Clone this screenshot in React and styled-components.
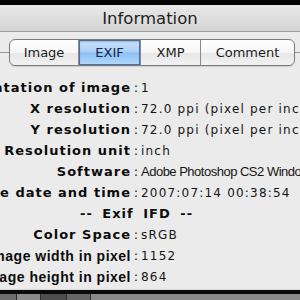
import React from 'react';
import styled, { createGlobalStyle } from 'styled-components';

const GlobalStyle = createGlobalStyle`
  html, body {
    margin: 0;
    padding: 0;
    width: 300px;
    height: 300px;
    overflow: hidden;
    background: #ebebeb;
  }
`;

const Window = styled.div`
  width: 300px;
  height: 300px;
  display: flex;
  flex-direction: column;
  overflow: hidden;
  background: #ebebeb;
`;

const TopEdge = styled.div`
  height: 5px;
  flex-shrink: 0;
  background: #050505;
`;

const TitleBar = styled.div`
  height: 26px;
  flex-shrink: 0;
  display: flex;
  align-items: center;
  justify-content: center;
  font-family: 'DejaVu Sans', sans-serif;
  font-size: 16.5px;
  color: #1e1e1e;
  background: linear-gradient(#e8e8e8, #d4d4d4);
  border-bottom: 1px solid #9c9c9c;
`;

const Body = styled.div`
  flex: 1;
  display: flex;
  flex-direction: column;
  background: #ebebeb;
  border-bottom: 1px solid #d9d9d9;
`;

const TabRow = styled.div`
  position: relative;
  margin-top: 7px;
  height: 27px;
  padding-left: 9px;

  &::before {
    content: '';
    position: absolute;
    left: 0;
    right: 0;
    top: 13px;
    border-top: 1px solid #9a9a9a;
  }
`;

const Segmented = styled.div`
  position: relative;
  z-index: 1;
  display: flex;
  width: 286px;
  height: 27px;
  box-sizing: border-box;
  border: 1px solid #7c7c7c;
  border-radius: 6px;
  overflow: hidden;
  background: linear-gradient(#ffffff 0%, #f6f6f6 50%, #e6e6e6 51%, #f2f2f2 100%);
  box-shadow: 0 1px 1px rgba(0, 0, 0, 0.12);
`;

const Segment = styled.div`
  width: ${(props) => props.w}px;
  box-sizing: border-box;
  display: flex;
  align-items: center;
  justify-content: center;
  font-family: 'DejaVu Sans', sans-serif;
  font-size: 13px;
  color: ${(props) => (props.active ? '#14264a' : '#1c1c1c')};
  border-left: ${(props) => (props.first ? 'none' : '1px solid #8a8a8a')};
  background: ${(props) =>
    props.active
      ? 'linear-gradient(#cfe5fc 0%, #a9d0f7 48%, #8cbff2 52%, #b2dafc 100%)'
      : 'transparent'};
  box-shadow: ${(props) =>
    props.active ? 'inset 0 0 0 1px #4f6f9c, inset 0 2px 2px rgba(30, 60, 110, 0.3)' : 'none'};
`;

const Rows = styled.div`
  margin-top: 11px;
  display: grid;
  grid-template-columns: 131px 10px 1fr;
  grid-auto-rows: 21px;
  align-items: center;
`;

const Label = styled.div`
  display: flex;
  justify-content: flex-end;
  white-space: nowrap;
  font-family: ${(props) => (props.narrow ? "'Liberation Sans', Arial" : "'DejaVu Sans'")}, sans-serif;
  font-weight: bold;
  font-size: ${(props) => (props.narrow ? 14 : 13)}px;
  letter-spacing: ${(props) => (props.narrow ? 0.5 : 1)}px;
  color: #0c0c0c;

  span {
    flex-shrink: 0;
  }
`;

const Colon = styled.div`
  text-align: center;
  font-family: 'DejaVu Sans', sans-serif;
  font-size: 13px;
  color: #111;
`;

const Value = styled.div`
  white-space: nowrap;
  font-family: ${(props) => (props.narrow ? "'Liberation Sans', Arial" : "'DejaVu Sans'")}, sans-serif;
  font-size: ${(props) => (props.narrow ? 13 : 12)}px;
  letter-spacing: ${(props) => (props.narrow ? -0.5 : 1.2)}px;
  color: #151515;
`;

const Section = styled.div`
  grid-column: 1 / -1;
  padding-left: 80px;
  white-space: nowrap;
  font-family: 'DejaVu Sans', sans-serif;
  font-weight: bold;
  font-size: 13px;
  letter-spacing: 1px;
  word-spacing: 4px;
  color: #0c0c0c;
`;

const Footer = styled.div`
  height: 6px;
  flex-shrink: 0;
  display: flex;
  border-top: 4px solid #0a0a0a;
  background: #8a8a8a;
`;

const FooterCell = styled.div`
  width: ${(props) => props.w}px;
  background: ${(props) => props.bg};
  border-right: 1px solid #2e2e2e;
`;

const tabs = [
  { name: 'Image', w: 68 },
  { name: 'EXIF', w: 62, active: true },
  { name: 'XMP', w: 60 },
  { name: 'Comment', w: 94 },
];

const rows = [
  { label: 'Orientation of image', value: '1' },
  { label: 'X resolution', value: '72.0 ppi (pixel per inch)' },
  { label: 'Y resolution', value: '72.0 ppi (pixel per inch)' },
  { label: 'Resolution unit', value: 'inch' },
  { label: 'Software', value: 'Adobe Photoshop CS2 Windows', narrowValue: true },
  { label: 'File change date and time', value: '2007:07:14 00:38:54' },
  { section: '-- Exif IFD --' },
  { label: 'Color Space', value: 'sRGB' },
  { label: 'Image width in pixel', value: '1152', narrow: true },
  { label: 'Image height in pixel', value: '864', narrow: true },
];

const footerCells = [
  { w: 16, bg: '#6e6e6e' },
  { w: 23, bg: '#8c8c8c' },
  { w: 25, bg: '#4e4e4e' },
  { w: 23, bg: '#666' },
];

const App = () => (
  <>
    <GlobalStyle />
    <Window>
      <TopEdge />
      <TitleBar>Information</TitleBar>
      <Body>
        <TabRow>
          <Segmented>
            {tabs.map((t, i) => (
              <Segment key={t.name} w={t.w} active={t.active} first={i === 0}>
                {t.name}
              </Segment>
            ))}
          </Segmented>
        </TabRow>
        <Rows>
          {rows.map((r) =>
            r.section ? (
              <Section key={r.section}>{r.section}</Section>
            ) : (
              <React.Fragment key={r.label}>
                <Label narrow={r.narrow}>
                  <span>{r.label}</span>
                </Label>
                <Colon>:</Colon>
                <Value narrow={r.narrowValue}>{r.value}</Value>
              </React.Fragment>
            )
          )}
        </Rows>
      </Body>
      <Footer>
        {footerCells.map((c, i) => (
          <FooterCell key={i} w={c.w} bg={c.bg} />
        ))}
      </Footer>
    </Window>
  </>
);

export default App;
